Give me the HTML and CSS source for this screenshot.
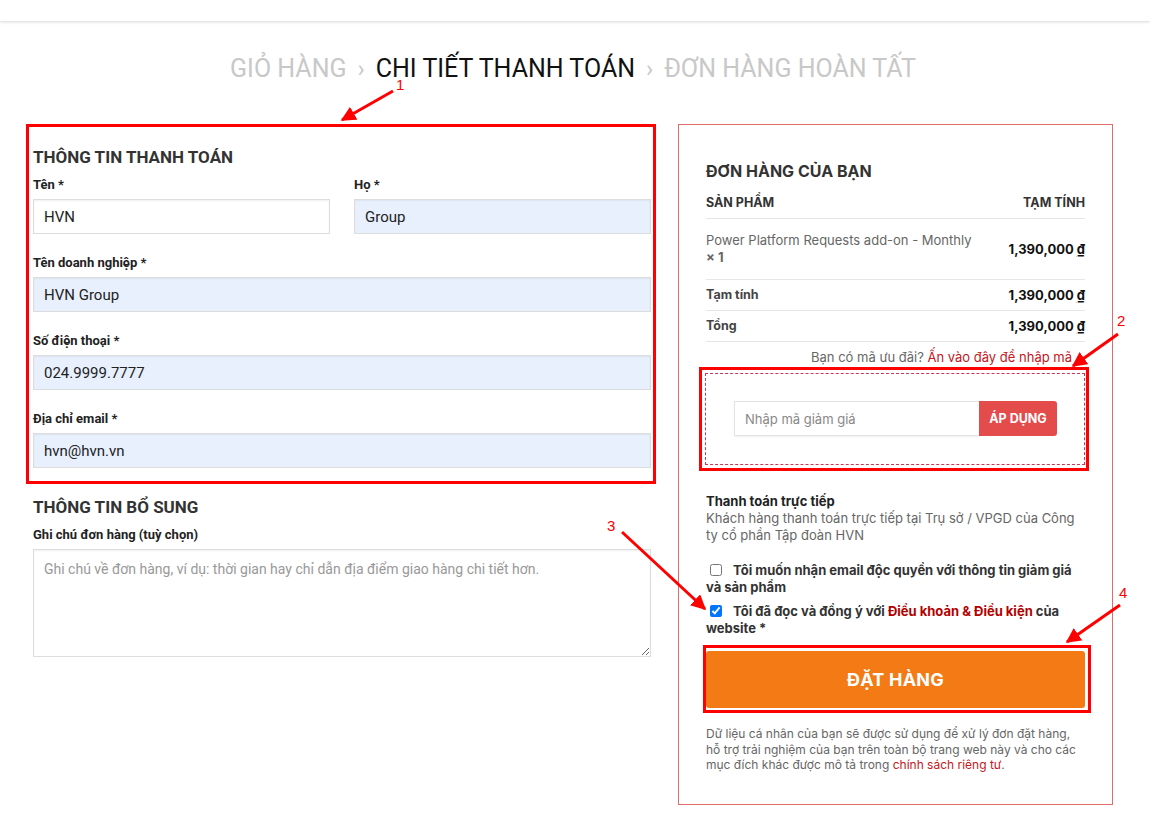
FILE: index.html
```html
<!DOCTYPE html>
<html lang="vi">
<head>
<meta charset="utf-8">
<title>Chi tiết thanh toán</title>
<link rel="stylesheet" href="styles.css">
</head>
<body>
<div class="page">
  <header class="topbar"></header>

  <nav class="steps">
    <span class="step">GIỎ HÀNG</span>
    <span class="sep">›</span>
    <span class="step current">CHI TIẾT THANH TOÁN</span>
    <span class="sep">›</span>
    <span class="step">ĐƠN HÀNG HOÀN TẤT</span>
  </nav>

  <main class="checkout">
    <section class="billing">
      <h3 class="sec-title">THÔNG TIN THANH TOÁN</h3>
      <div class="row-2">
        <div class="field">
          <label class="lbl">Tên *</label>
          <input class="inp" type="text" value="HVN">
        </div>
        <div class="field">
          <label class="lbl">Họ *</label>
          <input class="inp fill" type="text" value="Group">
        </div>
      </div>
      <div class="field">
        <label class="lbl">Tên doanh nghiệp *</label>
        <input class="inp fill" type="text" value="HVN Group">
      </div>
      <div class="field">
        <label class="lbl">Số điện thoại *</label>
        <input class="inp fill" type="text" value="024.9999.7777">
      </div>
      <div class="field">
        <label class="lbl">Địa chỉ email *</label>
        <input class="inp fill" type="text" value="hvn@hvn.vn">
      </div>

      <h3 class="sec-title extra">THÔNG TIN BỔ SUNG</h3>
      <div class="field">
        <label class="lbl">Ghi chú đơn hàng (tuỳ chọn)</label>
        <textarea class="note" placeholder="Ghi chú về đơn hàng, ví dụ: thời gian hay chỉ dẫn địa điểm giao hàng chi tiết hơn."></textarea>
      </div>
    </section>

    <aside class="order">
      <h3 class="order-title">ĐƠN HÀNG CỦA BẠN</h3>
      <div class="ot-row ot-head">
        <span>SẢN PHẨM</span>
        <span>TẠM TÍNH</span>
      </div>
      <div class="ot-row ot-item">
        <span class="pname">Power Platform Requests add-on - Monthly<br><strong class="qty">× 1</strong></span>
        <span class="price">1,390,000 <u>₫</u></span>
      </div>
      <div class="ot-row ot-sum">
        <span class="slbl">Tạm tính</span>
        <span class="price">1,390,000 <u>₫</u></span>
      </div>
      <div class="ot-row ot-sum">
        <span class="slbl">Tổng</span>
        <span class="price">1,390,000 <u>₫</u></span>
      </div>

      <p class="coupon-q">Bạn có mã ưu đãi? <a class="red-link">Ấn vào đây để nhập mã</a></p>

      <div class="coupon-box">
        <div class="coupon-row">
          <input class="coupon-inp" type="text" placeholder="Nhập mã giảm giá">
          <button class="coupon-btn" type="button">ÁP DỤNG</button>
        </div>
      </div>

      <div class="pay">
        <div class="pay-title">Thanh toán trực tiếp</div>
        <p class="pay-desc">Khách hàng thanh toán trực tiếp tại Trụ sở / VPGD của Công ty cổ phần Tập đoàn HVN</p>
      </div>

      <label class="chk"><input type="checkbox"> Tôi muốn nhận email độc quyền với thông tin giảm giá và sản phẩm</label>
      <label class="chk chk2"><input type="checkbox" checked> Tôi đã đọc và đồng ý với <a class="terms">Điều khoản &amp; Điều kiện</a> của website *</label>

      <button class="place" type="button">ĐẶT HÀNG</button>

      <p class="privacy">Dữ liệu cá nhân của bạn sẽ được sử dụng để xử lý đơn đặt hàng, hỗ trợ trải nghiệm của bạn trên toàn bộ trang web này và cho các mục đích khác được mô tả trong <a class="red-link">chính sách riêng tư</a>.</p>
    </aside>
  </main>

  <svg class="annot" width="1150" height="820" viewBox="0 0 1150 820" aria-hidden="true">
    <defs>
      <marker id="ah" viewBox="0 0 10 10" refX="9" refY="5" markerWidth="5" markerHeight="5" orient="auto">
        <path d="M0,0 L10,5 L0,10 Z" fill="#f00"/>
      </marker>
    </defs>
    <rect x="27.5" y="125.5" width="627" height="357" fill="none" stroke="#f00" stroke-width="3"/>
    <rect x="700.5" y="368.5" width="387" height="101" fill="none" stroke="#f00" stroke-width="3"/>
    <rect x="704.5" y="646.5" width="385" height="65" fill="none" stroke="#f00" stroke-width="3"/>

    <line x1="393" y1="91" x2="342" y2="120" stroke="#f00" stroke-width="3" marker-end="url(#ah)"/>
    <line x1="1118" y1="334" x2="1073" y2="366" stroke="#f00" stroke-width="3" marker-end="url(#ah)"/>
    <line x1="622" y1="532" x2="705" y2="609" stroke="#f00" stroke-width="3" marker-end="url(#ah)"/>
    <line x1="1120" y1="605" x2="1067" y2="642" stroke="#f00" stroke-width="3" marker-end="url(#ah)"/>

    <text class="num" x="396" y="90">1</text>
    <text class="num" x="1117" y="326">2</text>
    <text class="num" x="607" y="531">3</text>
    <text class="num" x="1119" y="598">4</text>
  </svg>
</div>
</body>
</html>
```

FILE: styles.css
```css
* { box-sizing: border-box; }

html, body {
  margin: 0;
  padding: 0;
  background: #fff;
}

body {
  font-family: Roboto, "Liberation Sans", sans-serif;
  color: #333;
}

.page {
  position: relative;
  width: 1150px;
  min-height: 820px;
}

.topbar {
  height: 21px;
  background: #fff;
  box-shadow: 0 1px 3px rgba(0, 0, 0, 0.16);
  position: relative;
}

.steps {
  display: flex;
  justify-content: center;
  align-items: center;
  gap: 11px;
  margin-top: 33px;
  font-family: Roboto, "Liberation Sans", sans-serif;
  font-size: 25px;
  line-height: 30px;
  padding-right: 4px;
}

.step { color: #c8c8c8; }
.step.current { color: #111; }
.sep { color: #c8c8c8; font-size: 24px; }

.checkout {
  display: flex;
  align-items: flex-start;
  gap: 27px;
  padding-left: 33px;
  margin-top: 40px;
}

/* left column */
.billing {
  width: 618px;
  padding-top: 23px;
}

.sec-title {
  margin: 0 0 9px;
  font-size: 17px;
  line-height: 20px;
  font-weight: 700;
  color: #333;
}

.sec-title.extra {
  margin-top: 29px;
}

.row-2 {
  display: flex;
  gap: 24px;
}

.row-2 .field { flex: 1; }

.field + .field,
.row-2 + .field { margin-top: 20px; }

.row-2 .field + .field { margin-top: 0; }

.lbl {
  display: block;
  font-size: 13px;
  line-height: 18px;
  font-weight: 700;
  color: #222;
  margin-bottom: 5px;
}

.inp {
  display: block;
  width: 100%;
  height: 35px;
  border: 1px solid #ddd;
  background: #fff;
  padding: 0 10px;
  font-family: Roboto, "Liberation Sans", sans-serif;
  font-size: 15px;
  color: #222;
  box-shadow: inset 0 1px 2px rgba(0, 0, 0, 0.06);
  outline: none;
}

.inp.fill {
  background: #e8f0fe;
}

.note {
  display: block;
  width: 100%;
  height: 108px;
  border: 1px solid #ddd;
  padding: 10px;
  font-family: Roboto, "Liberation Sans", sans-serif;
  font-size: 14px;
  line-height: 18px;
  color: #222;
  resize: vertical;
  box-shadow: inset 0 1px 2px rgba(0, 0, 0, 0.06);
}

.note::placeholder { color: #999; }

/* right column */
.order {
  width: 435px;
  border: 1px solid #df6b6b;
  padding: 36px 27px 31px 27px;
  font-family: Inter, "Liberation Sans", sans-serif;
  color: #333;
}

.order-title {
  margin: 0 0 13px;
  font-size: 16px;
  line-height: 20px;
  font-weight: 700;
  color: #333;
}

.ot-row {
  display: flex;
  justify-content: space-between;
  align-items: center;
  border-bottom: 1px solid #e6e6e6;
}

.ot-head {
  font-size: 12.5px;
  line-height: 18px;
  font-weight: 700;
  color: #333;
  padding-bottom: 6px;
}

.ot-item {
  padding: 13px 0 13px;
  font-size: 13px;
  line-height: 17px;
}

.pname { color: #666; }
.qty { color: #666; font-weight: 700; }

.price {
  font-weight: 700;
  color: #111;
  font-size: 13px;
  white-space: nowrap;
}

.price u { text-decoration-thickness: 1px; text-underline-offset: 2px; }

.ot-sum {
  padding: 6px 0;
  font-size: 13px;
  line-height: 18px;
}

.slbl { font-weight: 700; color: #444; font-size: 12.5px; }

.coupon-q {
  margin: 7px 0 0;
  text-align: right;
  padding-right: 13px;
  font-size: 13px;
  line-height: 16px;
  color: #666;
}

.red-link { color: #c4161c; text-decoration: none; }

.coupon-box {
  margin-top: 8px;
  margin-left: -1px;
  border: 1px dashed #c9375a;
  padding: 27px 27px 28px 28px;
}

.coupon-row {
  display: flex;
}

.coupon-inp {
  width: 245px;
  height: 35px;
  border: 1px solid #e3e3e3;
  border-right: none;
  padding: 0 10px;
  font-family: Inter, "Liberation Sans", sans-serif;
  font-size: 13px;
  color: #333;
  box-shadow: 0 1px 2px rgba(0, 0, 0, 0.06);
  outline: none;
}

.coupon-inp::placeholder { color: #888; }

.coupon-btn {
  width: 78px;
  height: 35px;
  border: none;
  border-radius: 0 3px 3px 0;
  background: #e44b4b;
  color: #fff;
  font-family: Inter, "Liberation Sans", sans-serif;
  font-size: 12.5px;
  font-weight: 700;
  padding: 0;
}

.pay {
  margin-top: 27px;
}

.pay-title {
  font-size: 13px;
  line-height: 18px;
  font-weight: 700;
  color: #222;
}

.pay-desc {
  margin: 0;
  font-size: 13px;
  line-height: 17px;
  color: #666;
}

.chk {
  display: block;
  margin-top: 18px;
  font-size: 13px;
  line-height: 17px;
  font-weight: 700;
  color: #333;
}

.chk input {
  width: 12px;
  height: 12px;
  margin: 0 8px 0 4px;
  vertical-align: -1px;
}

.chk2 { margin-top: 7px; }

.terms { color: #b30000; text-decoration: none; }

.place {
  display: block;
  width: 100%;
  height: 57px;
  margin-top: 14px;
  border: none;
  border-radius: 3px;
  background: #f47a15;
  color: #fff;
  font-family: Inter, "Liberation Sans", sans-serif;
  font-size: 18px;
  font-weight: 700;
  letter-spacing: 0.2px;
}

.privacy {
  margin: 18px 0 0;
  font-size: 12px;
  line-height: 15.5px;
  color: #666;
}

/* annotation overlay */
.annot {
  position: absolute;
  left: 0;
  top: 0;
  pointer-events: none;
}

.num {
  fill: #f00;
  font-family: "Liberation Sans", Arial, sans-serif;
  font-size: 15px;
}
```
